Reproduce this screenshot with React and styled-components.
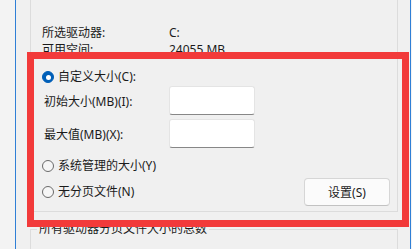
import React from 'react';
import styled, { createGlobalStyle } from 'styled-components';

const GlobalStyle = createGlobalStyle`
  html, body {
    margin: 0;
    padding: 0;
    background: #f3f3f3;
  }
  body {
    font-family: "Noto Sans", "Noto Sans CJK SC", sans-serif;
    font-size: 12px;
    color: #1b1b1b;
  }
`;

const Screen = styled.div`
  position: relative;
  width: 412px;
  height: 249px;
  overflow: hidden;
  display: flex;
  padding-left: 15px;
  box-sizing: border-box;
  background: #f3f3f3;
`;

const Dialog = styled.div`
  flex: 1;
  margin-right: 1px;
  border-left: 1px solid #2f7fd6;
  border-right: 1px solid #2f7fd6;
  background: #f0f0f0;
  padding: 0 12px 0 14px;
  display: flex;
  flex-direction: column;
`;

const SizeGroup = styled.div`
  border: 1px solid #dcdcdc;
  border-top: none;
  padding: 24px 7px 5px 11px;
  display: flex;
  flex-direction: column;
`;

const InfoRow = styled.div`
  display: flex;
  align-items: center;
  height: 17px;
  line-height: 14px;
`;

const Label = styled.span`
  width: ${p => (p.$indent ? 125 : 127)}px;
  padding-left: ${p => (p.$indent ? 2 : 0)}px;
  white-space: nowrap;
`;

const Value = styled.span`
  white-space: nowrap;
`;

const OptionRow = styled.div`
  display: flex;
  align-items: center;
  justify-content: space-between;
  height: ${p => p.$h || 16}px;
  margin-top: ${p => p.$mt || 0}px;
`;

const Option = styled.label`
  display: flex;
  align-items: center;
  gap: 4px;
  line-height: 16px;
  white-space: nowrap;
`;

const Radio = styled.span`
  width: 12px;
  height: 12px;
  border-radius: 50%;
  box-sizing: border-box;
  display: flex;
  align-items: center;
  justify-content: center;
  background: ${p => (p.$checked ? '#005fb8' : '#f6f6f6')};
  border: 1px solid ${p => (p.$checked ? '#005fb8' : '#6a6a6a')};
  &::after {
    content: '';
    display: ${p => (p.$checked ? 'block' : 'none')};
    width: 5px;
    height: 5px;
    border-radius: 50%;
    background: #ffffff;
  }
`;

const FieldRow = styled.div`
  display: flex;
  align-items: center;
  height: 29px;
  margin-top: ${p => p.$mt || 0}px;
`;

const Input = styled.div`
  width: 86px;
  height: 29px;
  box-sizing: border-box;
  background: #ffffff;
  border: 1px solid #e4e4e4;
  border-bottom: 1px solid #878787;
  border-radius: 3px;
`;

const Button = styled.button`
  width: 86px;
  height: 28px;
  box-sizing: border-box;
  background: #fbfbfb;
  border: 1px solid #d6d6d6;
  border-bottom-color: #c2c2c2;
  border-radius: 4px;
  font-family: inherit;
  font-size: 12px;
  color: #1b1b1b;
  padding: 0;
`;

const TotalGroup = styled.fieldset`
  margin: 9px 0 0;
  padding: 0 0 0 6px;
  border: 1px solid #dcdcdc;
  border-bottom: none;
  min-height: 40px;
`;

const GroupTitle = styled.legend`
  padding: 0 2px;
  line-height: 16px;
  font-size: 12px;
`;

const Highlight = styled.div`
  position: absolute;
  left: 27px;
  top: 52px;
  width: 382px;
  height: 175px;
  box-sizing: border-box;
  border: 7px solid #f23a3a;
  pointer-events: none;
`;

export default function App() {
  return (
    <>
      <GlobalStyle />
      <Screen>
        <Dialog>
          <SizeGroup>
            <InfoRow>
              <Label>所选驱动器:</Label>
              <Value>C:</Value>
            </InfoRow>
            <InfoRow>
              <Label>可用空间:</Label>
              <Value>24055 MB</Value>
            </InfoRow>
            <OptionRow $mt={11}>
              <Option>
                <Radio $checked />
                自定义大小(C):
              </Option>
            </OptionRow>
            <FieldRow $mt={1}>
              <Label $indent>初始大小(MB)(I):</Label>
              <Input />
            </FieldRow>
            <FieldRow $mt={4}>
              <Label $indent>最大值(MB)(X):</Label>
              <Input />
            </FieldRow>
            <OptionRow $mt={10}>
              <Option>
                <Radio />
                系统管理的大小(Y)
              </Option>
            </OptionRow>
            <OptionRow $h={28} $mt={4}>
              <Option>
                <Radio />
                无分页文件(N)
              </Option>
              <Button>设置(S)</Button>
            </OptionRow>
          </SizeGroup>
          <TotalGroup>
            <GroupTitle>所有驱动器分页文件大小的总数</GroupTitle>
          </TotalGroup>
        </Dialog>
        <Highlight />
      </Screen>
    </>
  );
}
